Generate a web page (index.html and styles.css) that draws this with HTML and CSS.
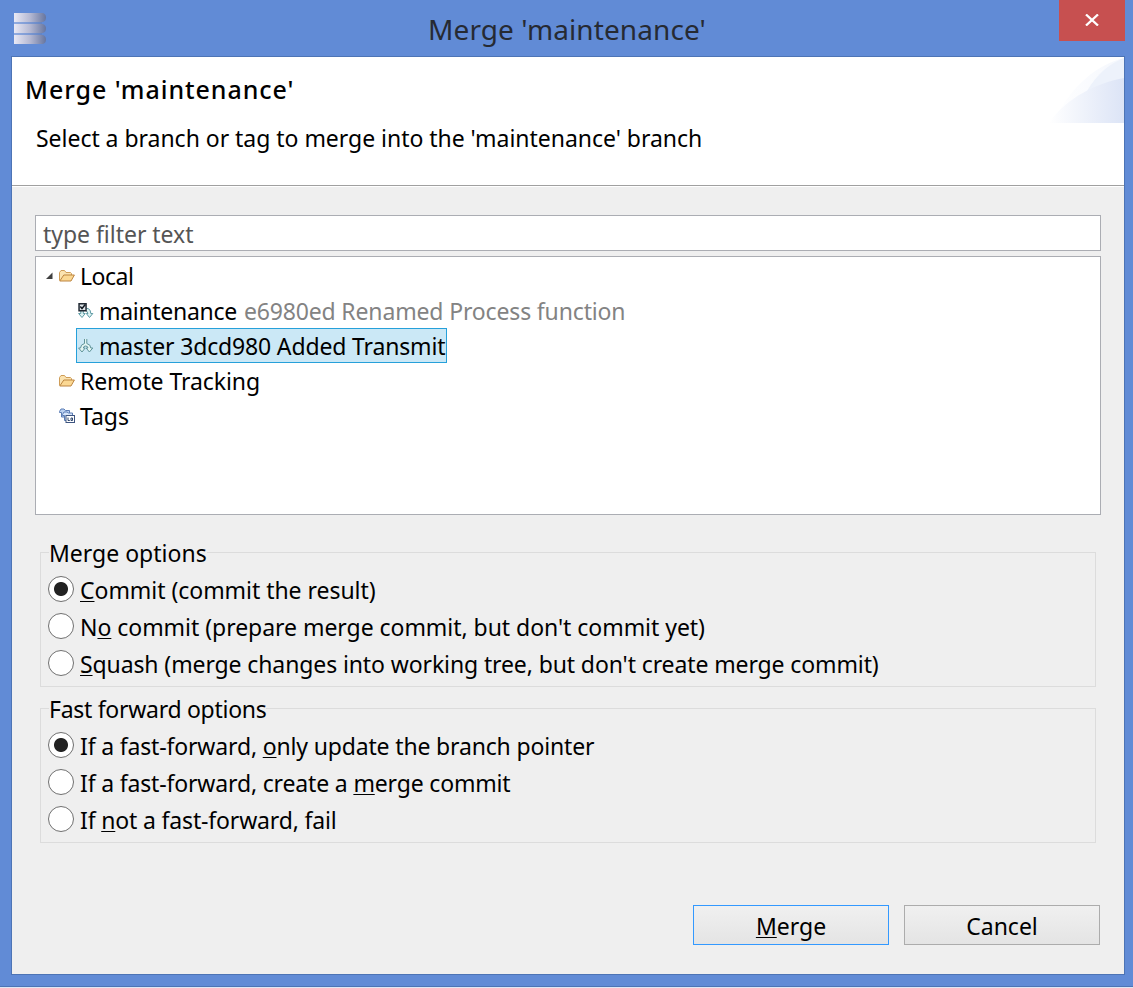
FILE: index.html
```
<!DOCTYPE html>
<html lang="en">
<head>
<meta charset="utf-8">
<title>Merge 'maintenance'</title>
<link rel="stylesheet" href="styles.css">
</head>
<body>
<svg class="defs" width="0" height="0" aria-hidden="true">
  <defs>
    <linearGradient id="disk" x1="0" x2="1"><stop offset="0" stop-color="#e9e9f5"/><stop offset=".5" stop-color="#b5b9d3"/><stop offset="1" stop-color="#66759f"/></linearGradient>
    <linearGradient id="wave" x1="0" x2="1"><stop offset="0" stop-color="#fff"/><stop offset="1" stop-color="#dce4f6"/></linearGradient>
    <linearGradient id="wave2" x1="0" x2="1"><stop offset="0" stop-color="#fff"/><stop offset="1" stop-color="#f4f7fd"/></linearGradient>
    <symbol id="folder" viewBox="0 0 16 16">
      <path d="M.5 12.500V4.500L2 2.500H5.500L7 4.500H11.500L12.500 5.500V7" fill="#fbe3b0" stroke="#cf9d57"/>
      <path d="M.8 13L4.800 7H15.400L12 13Z" fill="#fbd893" stroke="#bd8540" stroke-linejoin="round"/>
    </symbol>
    <symbol id="branch" viewBox="0 0 16 16">
      <path d="M6.500 1V5.500Q2.500 6.500 2.500 10H.6L4 14L7.200 10H5.300Q5.500 8 7.600 8Q9.800 8 10 10H8.200L11.400 14L14.800 10H12.800Q12.800 6.500 8.800 5.500V1" fill="#e4f5f3" stroke="#5f9399" stroke-linejoin="round"/>
    </symbol>
  </defs>
</svg>
<div class="window">
  <header class="titlebar">
    <svg class="app-icon" width="32" height="32" viewBox="0 0 32 32" fill="url(#disk)">
      <path d="M0 0H28V31H0Z" opacity=".35"/><path d="M0 0H29Q32 1 32 4.500T29 9H0Z"/><path d="M0 11H29Q32 12 32 15.500T29 20H0Z"/><path d="M0 22H29Q32 23 32 26.500T29 31H0Z"/>
    </svg>
    <span class="window-title">Merge 'maintenance'</span>
    <div class="close"><svg width="14" height="12" viewBox="0 0 14 12"><path d="M1 .5L13 11.500M13 .5L1 11.500" stroke="#fff" stroke-width="2.300"/></svg></div>
  </header>
  <main class="client">
    <section class="banner">
      <div><h1 class="heading">Merge 'maintenance'</h1><p class="desc">Select a branch or tag to merge into the 'maintenance' branch</p></div>
      <svg class="wave" width="75" height="66" viewBox="0 0 75 66">
        <path d="M4 66C22 28 48 8 75 1V66Z" fill="url(#wave2)"/><path d="M38 34Q52 10 75 1V23Z" fill="#edf2fb"/><path d="M0 66C18 40 48 26 75 21V66Z" fill="url(#wave)"/>
      </svg>
    </section>
    <section class="content">
      <div class="filter">type filter text</div>
      <div class="tree">
        <div class="row root"><svg class="expander" width="8" height="8" viewBox="0 0 8 8"><path d="M6.500 .5V7H0Z" fill="#404040"/></svg><svg class="icon" width="16" height="16"><use href="#folder"/></svg><span class="name short">Local</span></div>
        <div class="row leaf"><div class="item"><svg class="icon" width="16" height="16" viewBox="0 0 16 16"><path d="M8.500 5.500H10Q12.800 6.500 12.800 10.500H14.800L11.500 14.500L8.300 10.500H10L8.500 8M2.800 8V10.500H.6L4 14.500L7.200 10.500H5.300V8" fill="#dff3f3" stroke="#5d9aa4"/><rect x=".3" y="0" width="8.500" height="8.500" fill="#202832"/><rect x="1.800" y="1.500" width="5.500" height="5.500" fill="#dfe5ea"/><path d="M2.300 3.500L4 5.500L7.300 1.500" fill="none" stroke="#111820" stroke-width="1.500"/></svg><span class="name ref">maintenance</span><span class="name muted">e6980ed Renamed Process function</span></div></div>
        <div class="row leaf"><div class="item selected"><svg class="icon" width="16" height="16"><use href="#branch"/></svg><span class="name commit">master 3dcd980 Added Transmit</span></div></div>
        <div class="row top"><svg class="icon" width="16" height="16"><use href="#folder"/></svg><span class="name remote">Remote Tracking</span></div>
        <div class="row top"><svg class="icon" width="16" height="16" viewBox="0 0 16 16"><path d="M.5 3.500L2 1H5L6.500 2.500H10.500V9H2.500V4.500H.5Z" fill="#bcd2f2" stroke="#5b7cb5"/><path d="M3.500 6.500L5 4H8L9.500 5H13.500V12.500H5.500V7.500H3.500Z" fill="#d6e5fa" stroke="#5b7cb5"/><rect x="7" y="7.500" width="8.500" height="7" fill="#fff" stroke="#3d5480"/><path d="M9 9.500V12.500H10.800M12 10H13.500V12.500H12Z" fill="none" stroke="#30486f"/></svg><span class="name">Tags</span></div>
      </div>
      <div class="group">
        <div class="legend"><span class="caption">Merge options</span></div>
        <label class="option"><i class="radio on"></i><span class="text"><u>C</u>ommit (commit the result)</span></label>
        <label class="option"><i class="radio"></i><span class="text">N<u>o</u> commit (prepare merge commit, but don't commit yet)</span></label>
        <label class="option"><i class="radio"></i><span class="text long"><u>S</u>quash (merge changes into working tree, but don't create merge commit)</span></label>
      </div>
      <div class="group forward">
        <div class="legend"><span class="caption">Fast forward options</span></div>
        <label class="option"><i class="radio on"></i><span class="text">If a fast-forward, <u>o</u>nly update the branch pointer</span></label>
        <label class="option"><i class="radio"></i><span class="text">If a fast-forward, create a <u>m</u>erge commit</span></label>
        <label class="option"><i class="radio"></i><span class="text">If <u>n</u>ot a fast-forward, fail</span></label>
      </div>
      <div class="actions"><button class="button primary"><u>M</u>erge</button><button class="button">Cancel</button></div>
    </section>
  </main>
</div>
</body>
</html>
```
FILE: styles.css
```
* { box-sizing: border-box; }
body { margin: 0; background: #dfe7f5; font: 23px/35px "Noto Sans", sans-serif; color: #000; }
.defs { position: absolute; }
.window { height: 987px; background: #618bd6; border-bottom: 1px solid #4d74b5; display: flex; flex-direction: column; padding: 0 8px 11px 11px; }
.titlebar { height: 56px; display: flex; padding-left: 3px; flex: none; }
.app-icon { margin-top: 13px; flex: none; }
.window-title { flex: 1; padding-left: 382px; font-size: 28px; line-height: 58px; letter-spacing: .1px; color: #262a33; }
.close { width: 66px; height: 41px; background: #c75050; display: flex; justify-content: center; align-items: center; padding-bottom: 1px; }
.client { flex: 1; border: 1px solid #4d74b5; background: #efefef; display: flex; flex-direction: column; }
.banner { height: 130px; background: #fff; border-bottom: 1px solid #fff; box-shadow: inset 0 -1px #a0a0a0; display: flex; justify-content: space-between; }
.heading { margin: 14px 0 0 13px; font-size: 25px; font-weight: 500; line-height: 36px; letter-spacing: .95px; }
.desc { margin: 14px 0 0 24px; letter-spacing: -.03px; }
.wave { flex: none; }
.content { padding: 28px 23px 0; }
.filter { height: 36px; border: 1px solid #abadb3; background: #fff; color: #555; padding: 1px 7px; letter-spacing: -.03px; }
.tree { height: 259px; margin-top: 5px; border: 1px solid #abadb3; background: #fff; padding-top: 1px; }
.row { height: 35px; display: flex; align-items: center; white-space: nowrap; }
.icon { flex: none; margin: 0 5px 0 0; }
.root { padding-left: 10px; }
.expander { margin-right: 5px; }
.leaf { padding-left: 40px; }
.top { padding-left: 23px; }
.item { height: 35px; display: flex; align-items: center; border: 1px solid transparent; padding: 0 1px; }
.selected { background: #cbe8f6; border-color: #26a0da; }
.name { padding-top: 2px; }
.short { letter-spacing: -.5px; }
.ref { letter-spacing: -.3px; }
.muted { color: #838383; margin-left: 7px; letter-spacing: -.15px; }
.commit { letter-spacing: -.15px; }
.remote { letter-spacing: -.08px; }
.group { margin: 37px 5px 0; height: 135px; border: 1px solid #dcdcdc; padding-left: 7px; }
.forward { margin-top: 21px; letter-spacing: -.17px; }
.forward .caption { letter-spacing: -.28px; }
.legend { width: fit-content; height: 18px; margin: -18px 0 18px -1px; padding: 0 2px; line-height: 37px; }
.caption { background: #efefef; }
.option { height: 37px; display: flex; align-items: center; line-height: 37px; white-space: nowrap; }
.text { padding-top: 2px; letter-spacing: -.04px; }
.long { letter-spacing: -.11px; }
.forward .text { letter-spacing: -.16px; }
.radio { width: 26px; height: 26px; border: 1px solid #707070; border-radius: 50%; background: #fff; margin: 0 6px 2px 0; flex: none; }
.on { background: radial-gradient(circle, #222 6.500px, #fff 7.500px); }
u { text-decoration-thickness: 1px; text-underline-offset: 2px; text-decoration-skip-ink: none; }
.actions { display: flex; justify-content: flex-end; gap: 15px; margin-top: 62px; padding-right: 1px; }
.button { width: 196px; height: 40px; border: 1px solid #acacac; background: linear-gradient(#f0f0f0, #e4e4e4); padding: 3px 0 0; font: inherit; color: inherit; border-radius: 0; }
.primary { border-color: #3399ff; }
```
